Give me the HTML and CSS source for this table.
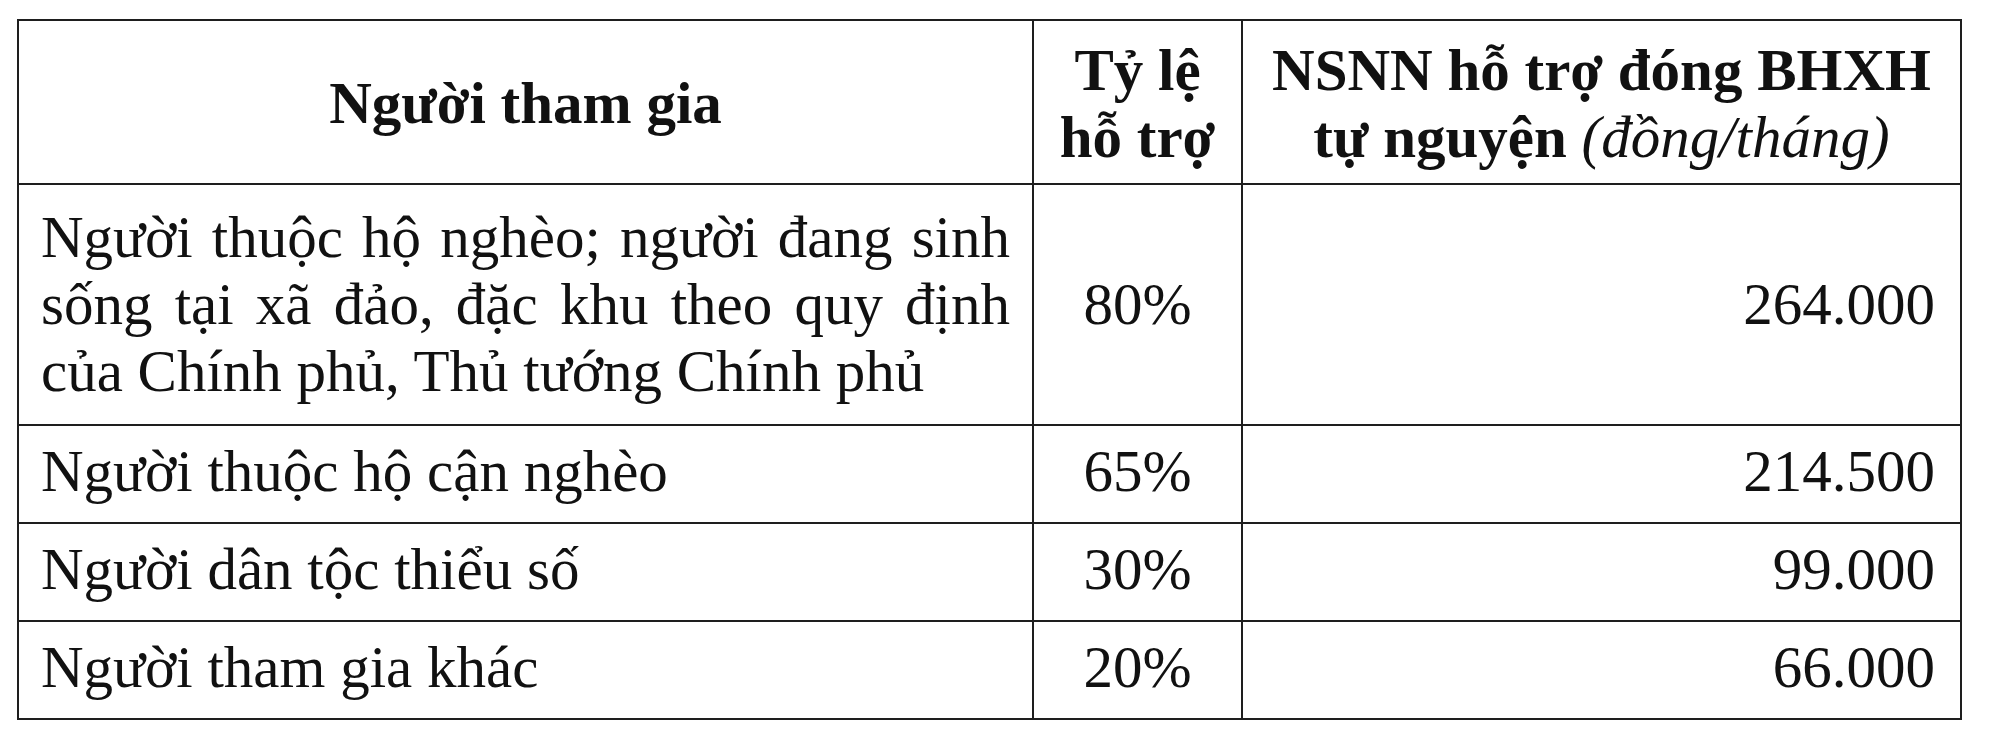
FILE: index.html
```html
<!DOCTYPE html>
<html lang="vi">
<head>
<meta charset="utf-8">
<title>Mức hỗ trợ đóng BHXH tự nguyện</title>
<link rel="stylesheet" href="styles.css">
</head>
<body>
<div class="tbl">
  <div class="cell head col-name">Người tham gia</div>
  <div class="cell head col-pct">Tỷ lệ hỗ trợ</div>
  <div class="cell head col-amt"><div class="txt">NSNN hỗ trợ đóng BHXH tự nguyện <em>(đồng/tháng)</em></div></div>

  <div class="cell name first">Người thuộc hộ nghèo; người đang sinh sống tại xã đảo, đặc khu theo quy định của Chính phủ, Thủ tướng Chính phủ</div>
  <div class="cell pct first">80%</div>
  <div class="cell amt first">264.000</div>

  <div class="cell name">Người thuộc hộ cận nghèo</div>
  <div class="cell pct">65%</div>
  <div class="cell amt">214.500</div>

  <div class="cell name">Người dân tộc thiểu số</div>
  <div class="cell pct">30%</div>
  <div class="cell amt">99.000</div>

  <div class="cell name">Người tham gia khác</div>
  <div class="cell pct">20%</div>
  <div class="cell amt">66.000</div>
</div>
</body>
</html>
```

FILE: styles.css
```css
html, body {
  margin: 0;
  padding: 0;
  background: #ffffff;
}

body {
  font-family: "Liberation Serif", "Times New Roman", serif;
  font-size: 59px;
  line-height: 67px;
  color: #111111;
}

.tbl {
  display: grid;
  grid-template-columns: 1015px 209px 719px;
  grid-template-rows: 164px 241px 98px 98px 98px;
  width: max-content;
  margin: 19px 0 0 17px;
  border-left: 2px solid #1e1e1e;
  border-top: 2px solid #1e1e1e;
}

.cell {
  box-sizing: border-box;
  border-right: 2px solid #1e1e1e;
  border-bottom: 2px solid #1e1e1e;
  display: flex;
  flex-direction: column;
  justify-content: center;
  padding: 0 6px 6px;
}

.head {
  font-weight: bold;
  text-align: center;
  padding: 3px 12px 0;
}

.head em {
  font-weight: normal;
  font-style: italic;
}

.col-amt {
  padding: 3px 20px 0;
}

.name {
  text-align: justify;
  padding-left: 22px;
  padding-right: 22px;
}

.pct {
  text-align: center;
}

.amt {
  text-align: right;
  padding-right: 25px;
}

.cell.first {
  padding-bottom: 0;
}
```
